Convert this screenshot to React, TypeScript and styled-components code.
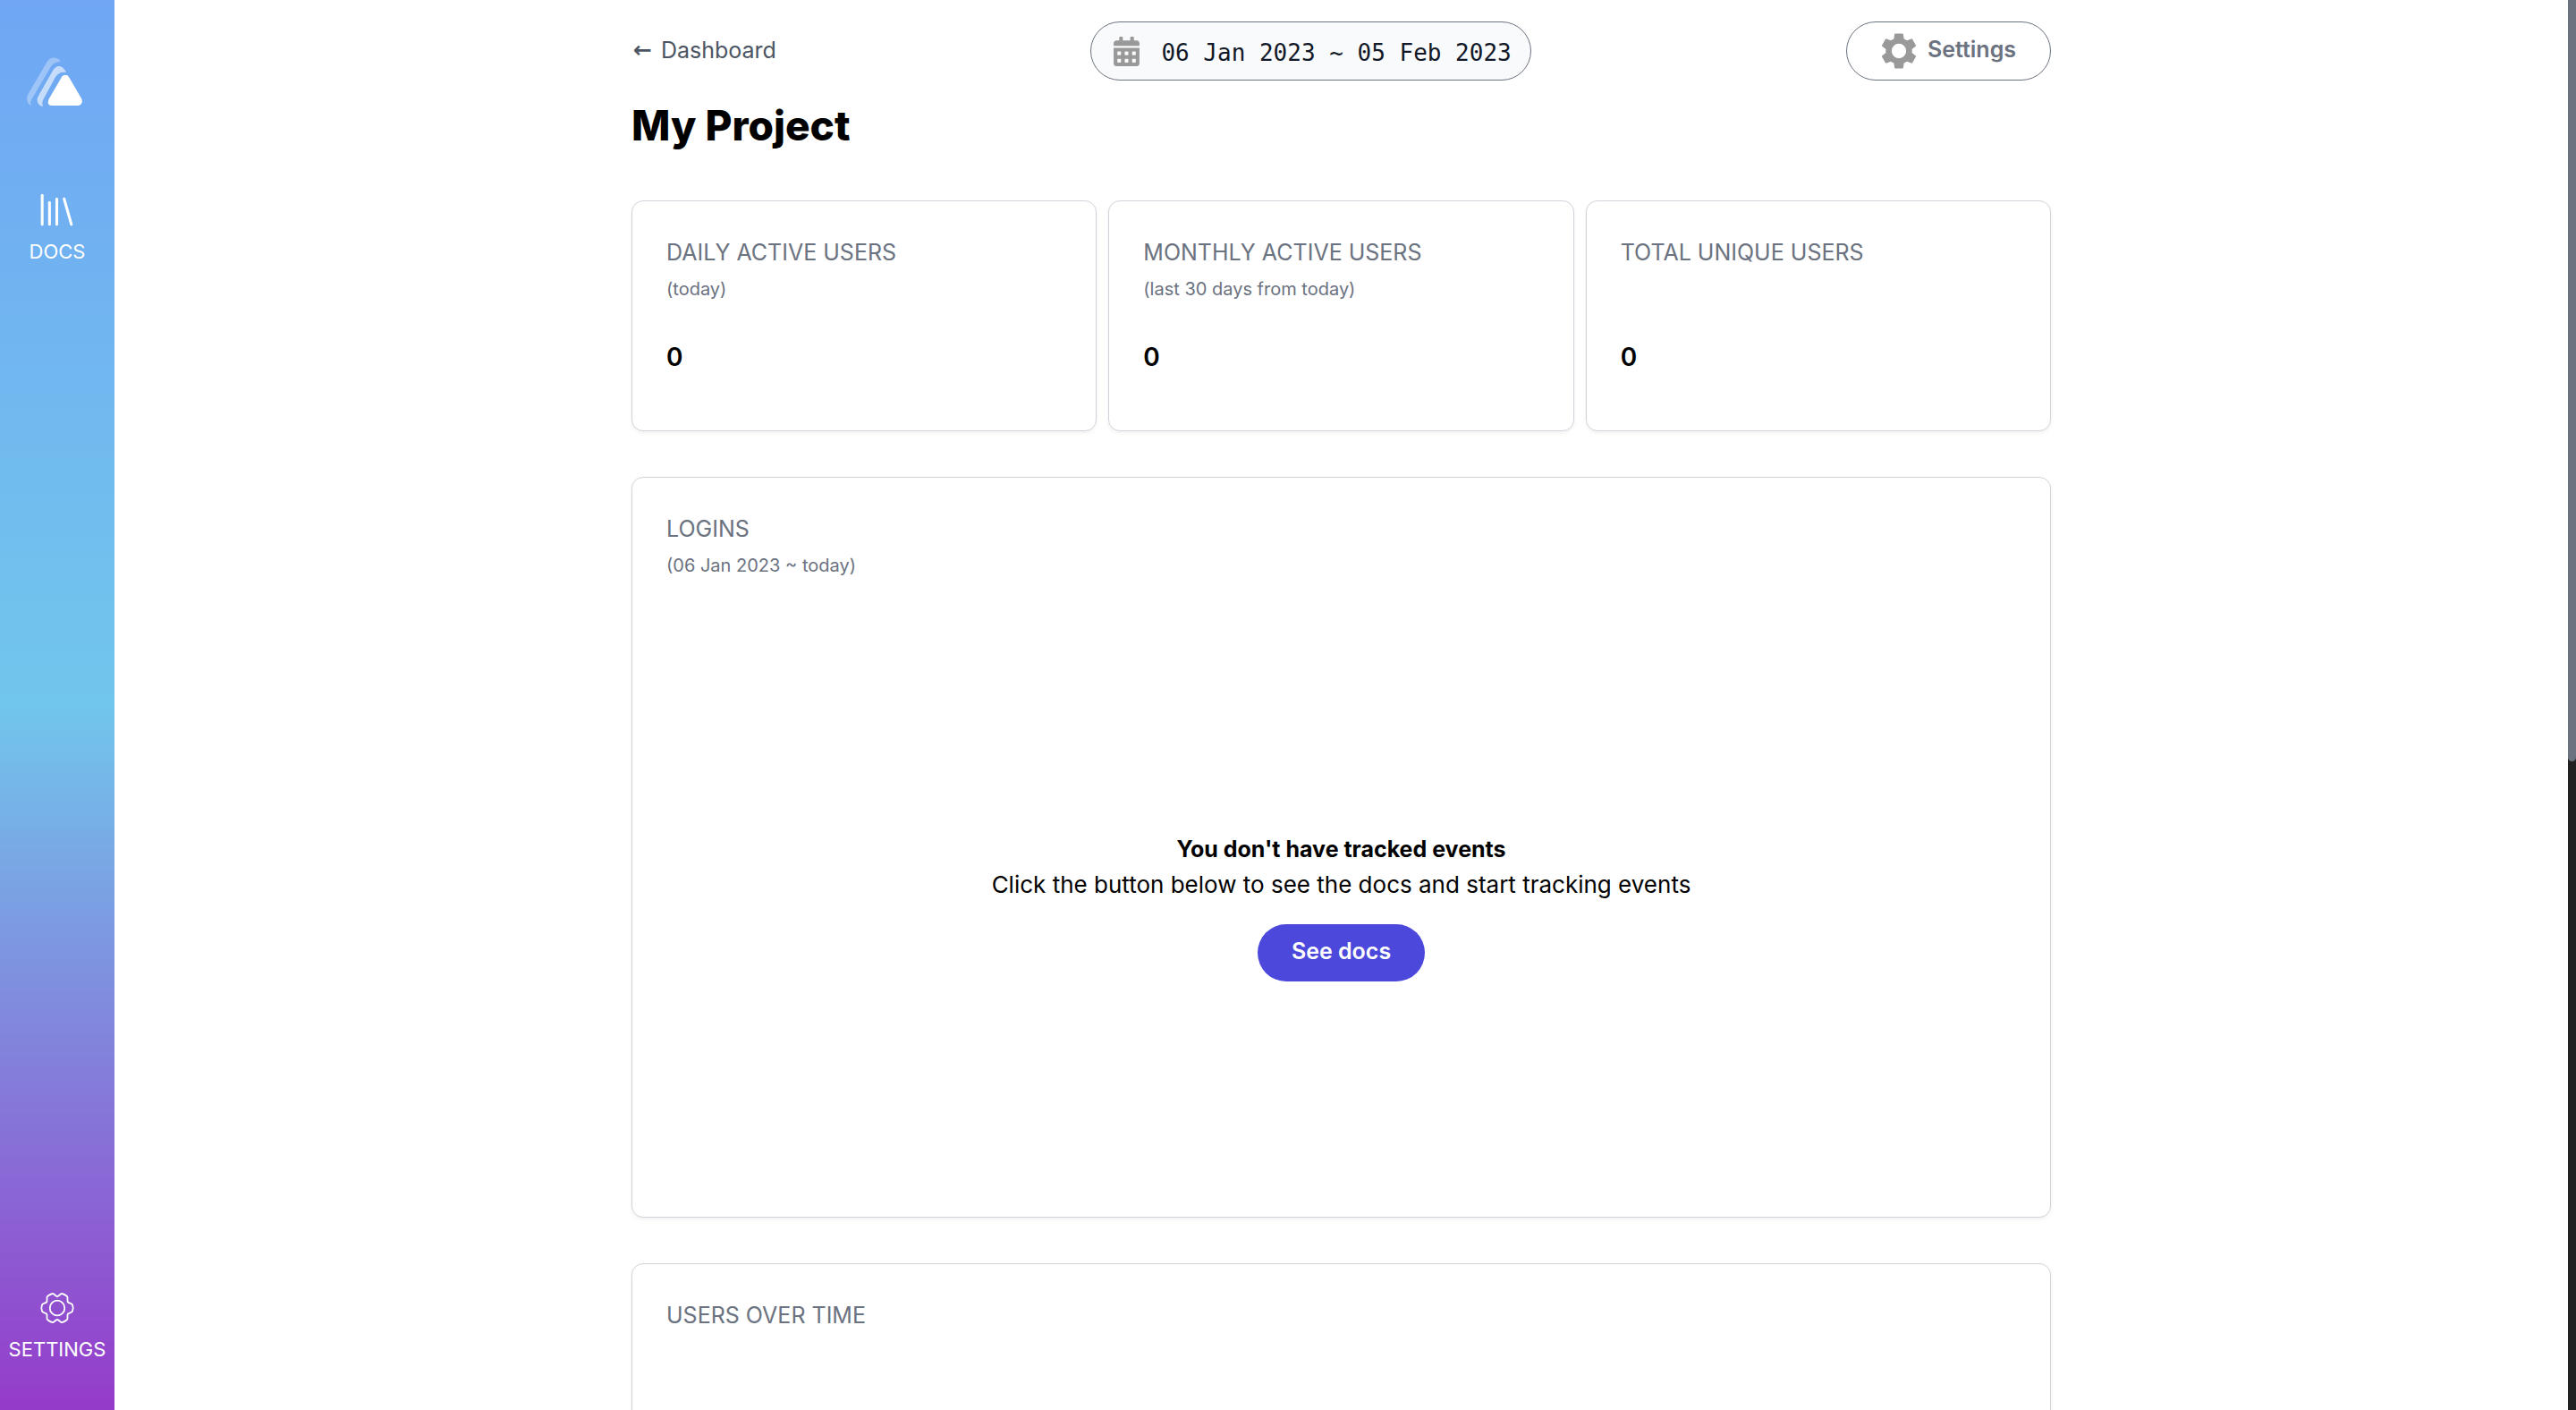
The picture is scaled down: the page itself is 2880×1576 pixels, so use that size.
import React from "react";
import styled, { createGlobalStyle } from "styled-components";
import { Library } from "lucide-react";
import { FaCalendarAlt } from "react-icons/fa";

const GlobalStyle = createGlobalStyle`
  *, *::before, *::after { box-sizing: border-box; }
  body {
    margin: 0;
    background: #fff;
    color: #000;
    font-family: Inter, "Liberation Sans", sans-serif;
    font-size: 25px;
    line-height: 40px;
  }
  h1, h2, h3, p { margin: 0; font-size: inherit; font-weight: inherit; }
  svg { display: block; flex: none; }
`;

const Shell = styled.div`
  display: flex;
  height: 100vh;
  overflow: hidden;
`;

const Sidebar = styled.nav`
  flex: none;
  width: 128px;
  display: flex;
  flex-direction: column;
  align-items: center;
  padding: 64px 0 52px;
  background: linear-gradient(to bottom, #70a6f4, #71c6ec 50%, #953bca);
`;

const NavLink = styled.a<{ $push?: boolean }>`
  display: flex;
  flex-direction: column;
  align-items: center;
  gap: 6px;
  margin-top: ${(p) => (p.$push ? "auto" : "90px")};
  color: #fff;
  font-size: 22px;
  line-height: 32px;
  text-decoration: none;
`;

const Content = styled.main`
  flex: 1;
  min-width: 0;
  overflow: hidden;
`;

const Container = styled.div`
  width: 100%;
  max-width: 1587px;
  margin: 0 auto;
  padding-top: 24px;
`;

const TopBar = styled.header`
  display: flex;
  justify-content: space-between;
  align-items: center;
`;

const BackLink = styled.a`
  display: flex;
  align-items: center;
  gap: 10px;
  padding: 0 0 2px 2px;
  color: #4b5563;
  text-decoration: none;
`;

const Arrow = styled.span`
  font-family: "DejaVu Sans", sans-serif;
  font-weight: 700;
`;

const DateField = styled.label`
  display: flex;
  align-items: center;
  gap: 22px;
  height: 66px;
  padding: 0 21px 0 23px;
  border: 1px solid #6b7280;
  border-radius: 33px;
  background: #f9fafb;
  color: #999;
`;

const DateInput = styled.input`
  width: 392px;
  padding: 4px 0 0;
  border: 0;
  outline: 0;
  background: transparent;
  color: #111827;
  font-family: "DejaVu Sans Mono", monospace;
  font-size: 26px;
  line-height: 40px;
`;

const PillButton = styled.button`
  display: flex;
  align-items: center;
  gap: 12px;
  height: 66px;
  padding: 0 38px;
  border: 1px solid #6b7280;
  border-radius: 33px;
  background: #fff;
  color: #6b7280;
  font: 600 25px/40px Inter, "Liberation Sans", sans-serif;
`;

const PillLabel = styled.span`
  padding-bottom: 4px;
`;

const DocsButton = styled(PillButton)`
  height: 64px;
  margin-top: 24px;
  border: 0;
  background: #4b48db;
  color: #fff;
`;

const Title = styled.h1`
  margin-top: 16px;
  font-size: 46px;
  font-weight: 800;
  line-height: 68px;
`;

const Stats = styled.section`
  display: grid;
  grid-template-columns: repeat(3, 1fr);
  gap: 13px;
  margin-top: 50px;
`;

const Card = styled.article<{ $minHeight: number }>`
  display: flex;
  flex-direction: column;
  min-height: ${(p) => p.$minHeight}px;
  padding: 37px 38px;
  border: 1px solid #d1d5db;
  border-radius: 13px;
  background: #fff;
  box-shadow: 0 2px 4px rgba(0, 0, 0, 0.06);
`;

const WideCard = styled(Card)`
  margin-top: 51px;
`;

const CardTitle = styled.h2`
  color: #6b7280;
`;

const CardNote = styled.p`
  min-height: 42px;
  color: #6b7280;
  font-size: 20px;
  line-height: 42px;
`;

const Value = styled.p`
  margin-top: 35px;
  font-size: 28px;
  font-weight: 600;
`;

const EmptyState = styled.div`
  flex: 1;
  display: flex;
  flex-direction: column;
  align-items: center;
  justify-content: center;
  padding-top: 50px;
`;

const EmptyTitle = styled.h3`
  font-weight: 700;
`;

const EmptyText = styled.p`
  font-size: 26px;
`;

const Rail = styled.div`
  flex: none;
  width: 9px;
  background: #212121;
`;

const Thumb = styled.div`
  height: 54%;
  border-radius: 0 0 5px 5px;
  background: #6b7280;
`;

const Logo = () => (
  <svg width="68" height="56" viewBox="0 0 68 56" fill="#fff" aria-hidden="true">
    <path
      opacity=".32"
      d="M5 54C0 52-1 46 1 42L22 6C26-1 34-1 38 5C32 5 29 7 26 12L6 46C4 49 4 52 5 54Z"
    />
    <path
      opacity=".6"
      d="M18 55C12 54 10 48 13 43L29 15C33 8 40 8 44 17C38 16 35 18 32 22L19 46C17 49 17 52 18 55Z"
    />
    <path d="M39 22C41 19 45 19 47 22L61 46C63 50 61 54 57 54H28C23 54 23 50 25 46Z" />
  </svg>
);

const GearOutline = () => (
  <svg width="48" height="48" viewBox="0 0 48 48" fill="none" stroke="#fff" strokeWidth="1.8" strokeLinejoin="round" aria-hidden="true">
    <path d="M24 11C26 11 27 8 29 8C31 8 33 9.500 35 11C36.500 12.500 34.500 16 36 17.500C37.500 19 40 18.500 41 20.500C41.800 22.500 41.800 25.500 41 27.500C40 29.500 37.500 29 36 30.500C34.500 32 36.500 35.500 35 37C33 38.500 31 40 29 40C27 40 26 37 24 37C22 37 21 40 19 40C17 40 15 38.500 13 37C11.500 35.500 13.500 32 12 30.500C10.500 29 8 29.500 7 27.500C6.200 25.500 6.200 22.500 7 20.500C8 18.500 10.500 19 12 17.500C13.500 16 11.500 12.500 13 11C15 9.500 17 8 19 8C21 8 22 11 24 11Z" />
    <circle cx="24" cy="24" r="8.300" />
  </svg>
);

const GearSolid = () => (
  <svg width="40" height="40" viewBox="2.200 2.200 19.600 19.600" fill="#999" fillRule="evenodd" aria-hidden="true">
    <path d="M19.140 12.940c.04-.3.06-.61.06-.94 0-.32-.02-.64-.07-.94l2.030-1.580c.18-.14.23-.41.12-.61l-1.920-3.320c-.12-.22-.37-.29-.59-.22l-2.390.96c-.5-.38-1.030-.7-1.620-.94l-.36-2.540c-.04-.24-.24-.41-.48-.41h-3.840c-.24 0-.43.17-.47.41l-.36 2.540c-.59.24-1.130.57-1.620.94l-2.390-.96c-.22-.08-.47 0-.59.22L2.740 8.870c-.12.21-.08.47.12.61l2.030 1.580c-.05.3-.09.63-.09.94s.02.64.07.94l-2.030 1.580c-.18.14-.23.41-.12.61l1.920 3.320c.12.22.37.29.59.22l2.390-.96c.5.38 1.030.7 1.620.94l.36 2.540c.05.24.24.41.48.41h3.840c.24 0 .44-.17.47-.41l.36-2.540c.59-.24 1.130-.56 1.620-.94l2.390.96c.22.08.47 0 .59-.22l1.920-3.320c.12-.22.07-.47-.12-.61l-2.010-1.580zM12 16a4 4 0 1 1 0-8 4 4 0 0 1 0 8z" />
  </svg>
);

const stats = [
  { title: "DAILY ACTIVE USERS", note: "(today)", value: 0 },
  { title: "MONTHLY ACTIVE USERS", note: "(last 30 days from today)", value: 0 },
  { title: "TOTAL UNIQUE USERS", note: "", value: 0 },
];

export default function App() {
  return (
    <>
      <GlobalStyle />
      <Shell>
        <Sidebar>
          <Logo />
          <NavLink href="#docs">
            <Library size={49} strokeWidth={1.5} />
            DOCS
          </NavLink>
          <NavLink href="#settings" $push>
            <GearOutline />
            SETTINGS
          </NavLink>
        </Sidebar>
        <Content>
          <Container>
            <TopBar>
              <BackLink href="#dashboard">
                <Arrow>←</Arrow>Dashboard
              </BackLink>
              <DateField>
                <FaCalendarAlt size={33} />
                <DateInput type="text" aria-label="Date range" defaultValue="06 Jan 2023 ~ 05 Feb 2023" />
              </DateField>
              <PillButton type="button">
                <GearSolid />
                <PillLabel>Settings</PillLabel>
              </PillButton>
            </TopBar>
            <Title>My Project</Title>
            <Stats>
              {stats.map((s) => (
                <Card key={s.title} $minHeight={258}>
                  <CardTitle>{s.title}</CardTitle>
                  <CardNote>{s.note}</CardNote>
                  <Value>{s.value}</Value>
                </Card>
              ))}
            </Stats>
            <WideCard $minHeight={828}>
              <CardTitle>LOGINS</CardTitle>
              <CardNote>(06 Jan 2023 ~ today)</CardNote>
              <EmptyState>
                <EmptyTitle>You don't have tracked events</EmptyTitle>
                <EmptyText>Click the button below to see the docs and start tracking events</EmptyText>
                <DocsButton type="button">
                  <PillLabel>See docs</PillLabel>
                </DocsButton>
              </EmptyState>
            </WideCard>
            <WideCard $minHeight={828}>
              <CardTitle>USERS OVER TIME</CardTitle>
            </WideCard>
          </Container>
        </Content>
        <Rail>
          <Thumb />
        </Rail>
      </Shell>
    </>
  );
}
